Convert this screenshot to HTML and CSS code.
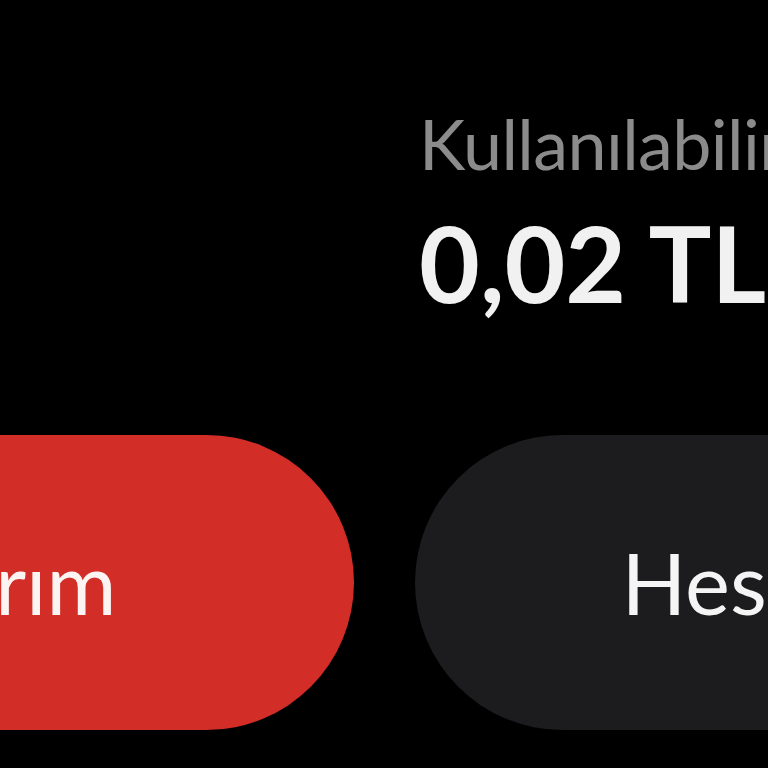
FILE: index.html
```html
<!DOCTYPE html>
<html lang="tr">
<head>
    <meta charset="UTF-8">
    <title>Hesabım</title>
    <link rel="stylesheet" href="styles.css">
</head>
<body>
    <div class="screen">
        <div class="balance-row">
            <div class="balance-spacer"></div>
            <div class="balance">
                <span class="balance-label">Kullanılabilir Bakiye</span>
                <span class="balance-value">0,02 TL</span>
            </div>
        </div>

        <div class="actions">
            <button class="action-btn primary">Yatırım</button>
            <button class="action-btn secondary">Hesap Aç</button>
        </div>
    </div>
</body>
</html>
```

FILE: styles.css
```css
* {
    margin: 0;
    padding: 0;
    box-sizing: border-box;
}

body {
    font-family: Lato, 'Open Sans', sans-serif;
    width: 768px;
    height: 768px;
    overflow: hidden;
    background: #000;
    -webkit-font-smoothing: antialiased;
}

/* Screen is zoomed in, both columns run off the edges */
.screen {
    margin-left: -410px;
    width: 1589px;
    padding-top: 108px;
}

.balance-row {
    display: grid;
    grid-template-columns: 764px 764px;
    column-gap: 61px;
}

.balance {
    display: flex;
    flex-direction: column;
    gap: 32px;
    padding-left: 4px;
}

.balance-label {
    font-size: 70px;
    line-height: 1;
    font-weight: 400;
    color: #8b8b8b;
    white-space: nowrap;
    letter-spacing: -0.6px;
}

.balance-value {
    font-size: 105px;
    line-height: 1;
    font-weight: 700;
    color: #f1f1f1;
    white-space: nowrap;
}

/* Action buttons */
.actions {
    display: flex;
    gap: 61px;
    margin-top: 120px;
}

.action-btn {
    width: 764px;
    height: 295px;
    border: none;
    border-radius: 148px;
    font-family: inherit;
    font-size: 85px;
    line-height: 1;
    font-weight: 400;
    color: #fbf4f2;
    display: flex;
    align-items: center;
    justify-content: center;
    white-space: nowrap;
}

.primary {
    background: #d22d26;
    padding-left: 30px;
}

.secondary {
    background: #1c1c1e;
    color: #f4f4f4;
}
```
